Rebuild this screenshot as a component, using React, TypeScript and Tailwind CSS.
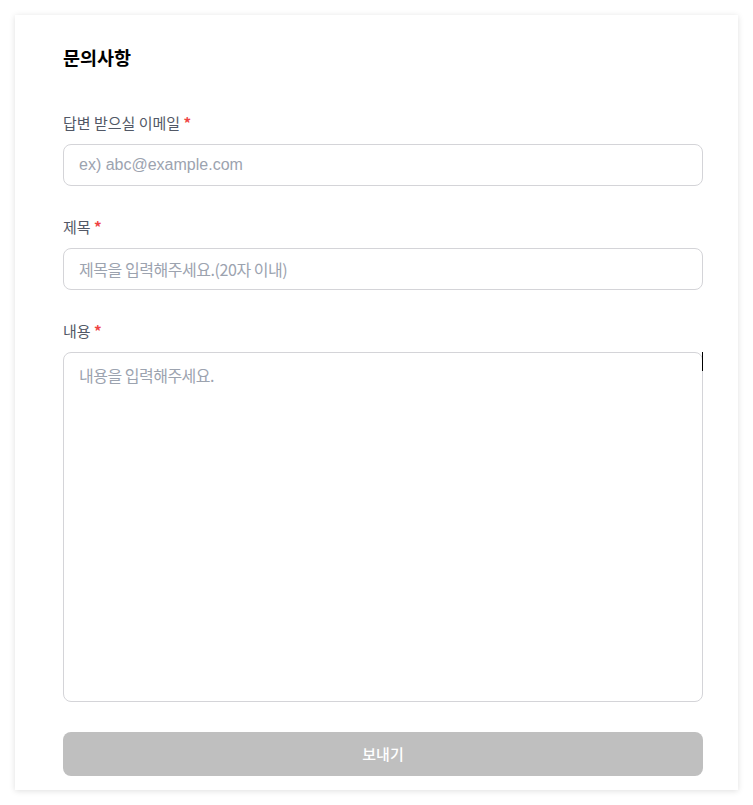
import React from "react";

const Label = ({ children }: { children: React.ReactNode }) => (
  <label className="block text-[15px] leading-[22px] text-[#525866] mb-[10px]">
    {children} <span className="text-[#ef4444] font-bold">*</span>
  </label>
);

export default function App() {
  return (
    <div
      className="min-h-[805px] bg-white p-[15px]"
      style={{ fontFamily: '"Noto Sans CJK KR", "Liberation Sans", sans-serif' }}
    >
      <div className="bg-white shadow-[0_1px_6px_rgba(0,0,0,0.13)] pl-[48px] pr-[35px] pt-[28px] pb-[14px]">
        <h1 className="text-[18.5px] leading-[28px] font-bold text-black mb-[41px]">문의사항</h1>

        <Label>답변 받으실 이메일</Label>
        <input
          placeholder="ex) abc@example.com"
          className="block w-full h-[42px] rounded-[8px] border border-[#d4d4d8] px-[15px] text-[16px] placeholder:text-[#9ca3af] outline-none"
          style={{ fontFamily: '"Liberation Sans", "Noto Sans CJK KR", sans-serif' }}
        />

        <div className="mt-[30px]">
          <Label>제목</Label>
          <input
            placeholder="제목을 입력해주세요.(20자 이내)"
            className="block w-full h-[42px] rounded-[8px] border border-[#d4d4d8] px-[15px] text-[16px] tracking-[-0.45px] placeholder:text-[#9ca3af] outline-none"
          />
        </div>

        <div className="mt-[30px] relative">
          <Label>내용</Label>
          <textarea
            placeholder="내용을 입력해주세요."
            className="block w-full h-[350px] rounded-[8px] border border-[#d4d4d8] px-[15px] py-[11px] text-[16px] leading-[22px] tracking-[-0.5px] placeholder:text-[#9ca3af] outline-none resize-none"
          />
          <div className="absolute right-0 top-[32px] w-[1px] h-[19px] bg-black" />
        </div>

        <button
          type="button"
          className="mt-[30px] w-full h-[44px] rounded-[8px] bg-[#bfbfbf] text-white text-[15px] font-medium"
        >
          보내기
        </button>
      </div>
    </div>
  );
}
